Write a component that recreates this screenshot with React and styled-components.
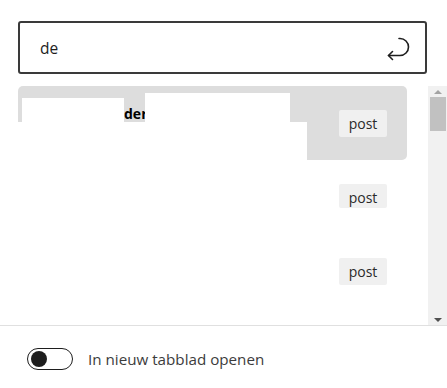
import React from "react";
import styled, { createGlobalStyle } from "styled-components";

const Global = createGlobalStyle`
  html, body { margin: 0; padding: 0; background: #fff; }
  body { font-family: "Open Sans", "Noto Sans", sans-serif; color: #1e1e1e; }
  * { box-sizing: border-box; }
`;

const Panel = styled.div`
  width: 447px;
  height: 388px;
  display: flex;
  flex-direction: column;
  background: #fff;
  overflow: hidden;
`;

const SearchRow = styled.div`
  padding: 21px 20px 0 18px;
`;

const SearchBox = styled.div`
  height: 53px;
  border: 2px solid #3a3a3a;
  border-radius: 3px;
  display: flex;
  align-items: center;
  padding: 0 12px 0 20px;
`;

const SearchText = styled.span`
  flex: 1;
  font-size: 15.5px;
  color: #1e1e1e;
`;

const ReturnIcon = styled.svg`
  width: 28px;
  height: 28px;
  flex: none;
`;

const ResultsArea = styled.div`
  margin-top: 12px;
  height: 240px;
  display: flex;
  border-bottom: 1px solid #e0e0e0;
`;

const List = styled.div`
  flex: 1;
  padding: 0 21px 0 18px;
  overflow: hidden;
`;

const Item = styled.div`
  height: 74px;
  display: flex;
  align-items: flex-start;
  border-radius: 5px;
  background: ${(p) => (p.$active ? "#dddddd" : "#ffffff")};
`;

const ItemMain = styled.div`
  width: 289px;
  height: 100%;
  display: flex;
  flex-direction: column;
`;

const TitleLine = styled.div`
  display: flex;
  align-items: flex-end;
  padding: 7px 0 0 4px;
`;

const Redact = styled.div`
  background: #ffffff;
  width: ${(p) => p.$w}px;
  height: ${(p) => p.$h}px;
  flex: none;
  position: relative;
  margin-left: ${(p) => p.$ml || 0}px;
`;

const RedactBottom = styled.div`
  flex: 1;
  background: #ffffff;
`;

const Match = styled.strong`
  font-size: 14px;
  font-weight: 700;
  line-height: 14px;
  color: #000;
  padding-bottom: 1px;
`;

const Badge = styled.span`
  flex: none;
  margin: 24px 20px 0 auto;
  width: 48px;
  height: ${(p) => (p.$clipped ? 24 : 27)}px;
  overflow: hidden;
  background: #f0f0f0;
  border-radius: 2px;
  font-size: 14px;
  line-height: 27px;
  text-align: center;
  color: #2a2a2a;
`;

const Scrollbar = styled.div`
  width: 19px;
  flex: none;
  background: #f1f1f1;
  display: flex;
  flex-direction: column;
  align-items: center;
`;

const Arrow = styled.div`
  height: 11px;
  display: flex;
  align-items: center;
  justify-content: center;
  &::before {
    content: "";
    border-left: 4px solid transparent;
    border-right: 4px solid transparent;
    ${(p) =>
      p.$down
        ? "border-top: 4px solid #505050;"
        : "border-bottom: 4px solid #a3a3a3;"}
  }
`;

const Thumb = styled.div`
  width: 16px;
  height: 34px;
  background: #c1c1c1;
`;

const Spacer = styled.div`
  flex: 1;
`;

const Footer = styled.div`
  flex: 1;
  display: flex;
  align-items: center;
  padding: 3px 0 0 27px;
  gap: 15px;
`;

const Toggle = styled.span`
  width: 46px;
  height: 22px;
  border: 1.5px solid #1e1e1e;
  border-radius: 11px;
  display: flex;
  align-items: center;
  padding-left: 3px;
  &::before {
    content: "";
    width: 16px;
    height: 16px;
    border-radius: 50%;
    background: #1e1e1e;
  }
`;

const Label = styled.span`
  font-size: 15.2px;
  color: #3c3c3c;
`;

export default function App() {
  return (
    <Panel>
      <Global />
      <SearchRow>
        <SearchBox>
          <SearchText>de</SearchText>
          <ReturnIcon viewBox="0 0 28 28" fill="none" stroke="#1e1e1e" strokeWidth="1.6" strokeLinecap="round" strokeLinejoin="round">
            <path d="M14 4.5 H15 A8.5 8.5 0 0 1 15 21.5 H3.5" />
            <path d="M7.5 17.5 L3.5 21.5 L7.5 25.5" />
          </ReturnIcon>
        </SearchBox>
      </SearchRow>
      <ResultsArea>
        <List>
          <Item $active>
            <ItemMain>
              <TitleLine>
                <Redact $w={102} $h={24} />
                <Match>der</Match>
                <Redact $w={145} $h={29} $ml={-3} />
              </TitleLine>
              <RedactBottom />
            </ItemMain>
            <Badge>post</Badge>
          </Item>
          <Item>
            <ItemMain />
            <Badge $clipped>post</Badge>
          </Item>
          <Item>
            <ItemMain />
            <Badge>post</Badge>
          </Item>
        </List>
        <Scrollbar>
          <Arrow />
          <Thumb />
          <Spacer />
          <Arrow $down />
        </Scrollbar>
      </ResultsArea>
      <Footer>
        <Toggle />
        <Label>In nieuw tabblad openen</Label>
      </Footer>
    </Panel>
  );
}
